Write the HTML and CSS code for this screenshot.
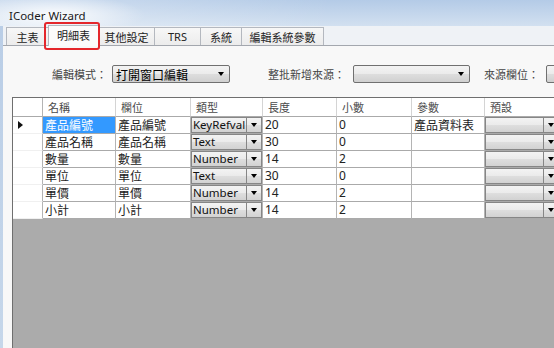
FILE: index.html
```html
<!DOCTYPE html>
<html>
<head>
<meta charset="utf-8">
<link rel="stylesheet" href="styles.css">
</head>
<body>
<div class="window">
  <div class="titlebar"><span class="title">ICoder Wizard</span></div>
  <div class="client">
    <div class="tabstrip">
      <div class="tab w1">主表</div>
      <div class="tab sel w2">明細表</div>
      <div class="tab w3">其他設定</div>
      <div class="tab w4 latin">TRS</div>
      <div class="tab w5">系統</div>
      <div class="tab w6">編輯系統參數</div>
    </div>
    <div class="page">
      <div class="form">
        <span class="lbl l1">編輯模式：</span>
        <div class="combo c1"><span class="ctext">打開窗口編輯</span><span class="arrow"></span></div>
        <span class="lbl l2">整批新增來源：</span>
        <div class="combo c2"><span class="ctext"></span><span class="arrow"></span></div>
        <span class="lbl l3">來源欄位：</span>
        <div class="combo c3"><span class="ctext"></span></div>
      </div>
      <div class="grid">
        <div class="hd rh"></div>
        <div class="hd">名稱</div>
        <div class="hd">欄位</div>
        <div class="hd">類型</div>
        <div class="hd">長度</div>
        <div class="hd">小數</div>
        <div class="hd">參數</div>
        <div class="hd">預設</div>

        <div class="rh"><span class="cur"></span></div>
        <div class="cell selcell">產品編號</div>
        <div class="cell">產品編號</div>
        <div class="cell cc"><div class="gcb"><span class="gt">KeyRefval</span><span class="gb"><span class="arrow"></span></span></div></div>
        <div class="cell num">20</div>
        <div class="cell num">0</div>
        <div class="cell">產品資料表</div>
        <div class="cell cc"><div class="gcb"><span class="gt"></span><span class="gb"><span class="arrow"></span></span></div></div>

        <div class="rh"></div>
        <div class="cell">產品名稱</div>
        <div class="cell">產品名稱</div>
        <div class="cell cc"><div class="gcb"><span class="gt">Text</span><span class="gb"><span class="arrow"></span></span></div></div>
        <div class="cell num">30</div>
        <div class="cell num">0</div>
        <div class="cell"></div>
        <div class="cell cc"><div class="gcb"><span class="gt"></span><span class="gb"><span class="arrow"></span></span></div></div>

        <div class="rh"></div>
        <div class="cell">數量</div>
        <div class="cell">數量</div>
        <div class="cell cc"><div class="gcb"><span class="gt">Number</span><span class="gb"><span class="arrow"></span></span></div></div>
        <div class="cell num">14</div>
        <div class="cell num">2</div>
        <div class="cell"></div>
        <div class="cell cc"><div class="gcb"><span class="gt"></span><span class="gb"><span class="arrow"></span></span></div></div>

        <div class="rh"></div>
        <div class="cell">單位</div>
        <div class="cell">單位</div>
        <div class="cell cc"><div class="gcb"><span class="gt">Text</span><span class="gb"><span class="arrow"></span></span></div></div>
        <div class="cell num">30</div>
        <div class="cell num">0</div>
        <div class="cell"></div>
        <div class="cell cc"><div class="gcb"><span class="gt"></span><span class="gb"><span class="arrow"></span></span></div></div>

        <div class="rh"></div>
        <div class="cell">單價</div>
        <div class="cell">單價</div>
        <div class="cell cc"><div class="gcb"><span class="gt">Number</span><span class="gb"><span class="arrow"></span></span></div></div>
        <div class="cell num">14</div>
        <div class="cell num">2</div>
        <div class="cell"></div>
        <div class="cell cc"><div class="gcb"><span class="gt"></span><span class="gb"><span class="arrow"></span></span></div></div>

        <div class="rh"></div>
        <div class="cell">小計</div>
        <div class="cell">小計</div>
        <div class="cell cc"><div class="gcb"><span class="gt">Number</span><span class="gb"><span class="arrow"></span></span></div></div>
        <div class="cell num">14</div>
        <div class="cell num">2</div>
        <div class="cell"></div>
        <div class="cell cc"><div class="gcb"><span class="gt"></span><span class="gb"><span class="arrow"></span></span></div></div>
      </div>
    </div>
  </div>
  <div class="highlight"></div>
</div>
</body>
</html>
```
FILE: styles.css
```css
html, body {
  margin: 0;
  padding: 0;
  width: 554px;
  height: 348px;
  overflow: hidden;
  font-family: "Noto Sans CJK TC", sans-serif;
}
.window {
  position: relative;
  width: 554px;
  height: 348px;
  display: flex;
  flex-direction: column;
  background: linear-gradient(#b9cde6, #c6d7ea);
  overflow: hidden;
}
.titlebar {
  height: 26px;
  flex: none;
  box-sizing: border-box;
  padding: 9px 0 0 9px;
  background:
    radial-gradient(ellipse 90px 20px at 55px 15px, rgba(255,255,255,0.9), rgba(255,255,255,0)),
    linear-gradient(90deg, rgba(255,255,255,0.35), rgba(255,255,255,0) 60%),
    linear-gradient(#b4cbe7, #d2e0f0);
}
.title {
  font-family: "Noto Sans", "Open Sans", sans-serif;
  font-size: 11.5px;
  line-height: 14px;
  color: #1a1a1a;
  display: block;
}
.client {
  flex: 1;
  min-height: 0;
  margin-left: 3px;
  display: flex;
  flex-direction: column;
  background: #f0f0f0;
}
.tabstrip {
  height: 20px;
  flex: none;
  box-sizing: border-box;
  display: flex;
  align-items: flex-end;
  padding-left: 3px;
  border-bottom: 1px solid #a3a7ae;
  background: #eff2f6;
}
.tab {
  height: 18px;
  box-sizing: border-box;
  border: 1px solid #b4b8bf;
  border-bottom: none;
  margin-right: -1px;
  background: linear-gradient(#f7f7f7, #ececec);
  font-size: 11px;
  line-height: 16px;
  color: #222;
  display: flex;
  align-items: center;
  justify-content: center;
}
.tab.latin {
  font-family: "Noto Sans", "Open Sans", sans-serif;
}
.tab.sel {
  height: 21px;
  margin-bottom: -1px;
  background: #fbfbfb;
  position: relative;
  z-index: 1;
  padding-bottom: 2px;
}
.w1 { width: 43px; }
.w2 { width: 51px; }
.w3 { width: 57px; }
.w4 { width: 47px; }
.w5 { width: 42px; }
.w6 { width: 83px; }

.page {
  flex: 1;
  min-height: 0;
  display: flex;
  flex-direction: column;
  padding: 19px 0 0 9px;
  background: #f8f8f8;
}
.form {
  height: 18px;
  flex: none;
  display: flex;
  align-items: center;
  white-space: nowrap;
  overflow: hidden;
}
.lbl {
  font-size: 11px;
  color: #444;
  flex: none;
  overflow: hidden;
}
.l1 { margin-left: 40px; width: 60px; }
.l2 { margin-left: 38px; width: 85px; }
.l3 { margin-left: 14px; width: 62px; }
.combo {
  flex: none;
  height: 18px;
  box-sizing: border-box;
  border: 1px solid #707070;
  border-radius: 2px;
  background: linear-gradient(#f3f3f3 0%, #ebebeb 48%, #dddddd 52%, #d0d0d0 100%);
  display: flex;
  align-items: center;
  padding: 0 5px 0 3px;
}
.c1 { width: 118px; }
.c2 { width: 117px; }
.c3 { width: 60px; }
.ctext {
  flex: 1;
  font-size: 12px;
  color: #000;
}
.arrow {
  width: 0;
  height: 0;
  border-left: 3.5px solid transparent;
  border-right: 3.5px solid transparent;
  border-top: 4px solid #000;
}

.grid {
  flex: 1;
  min-height: 0;
  margin-top: 14px;
  background: #ababab;
  border-top: 1px solid #6f6f6f;
  border-left: 1px solid #6f6f6f;
  display: grid;
  grid-template-columns: 30px 73px 75px 72px 74px 75px 73px 75px;
  grid-template-rows: 19px repeat(6, 17px);
  align-content: start;
  overflow: hidden;
}
.grid > div {
  box-sizing: border-box;
  background: #fff;
  border-right: 1px solid #b4b4b4;
  border-bottom: 1px solid #aaaaaa;
  white-space: nowrap;
  overflow: hidden;
}
.hd {
  font-size: 11px;
  color: #4a4a4a;
  padding-left: 5px;
  line-height: 18px;
  border-right-color: #d4d4d4 !important;
}
.grid > .rh {
  border-bottom-color: #f0f0f0;
  display: flex;
  align-items: center;
}
.grid > .hd.rh {
  border-bottom-color: #aaaaaa;
  border-right-color: #b4b4b4 !important;
}
.cur {
  width: 0;
  height: 0;
  margin-left: 5px;
  border-top: 4px solid transparent;
  border-bottom: 4px solid transparent;
  border-left: 5px solid #111;
}
.cell {
  font-size: 12px;
  line-height: 16px;
  padding-left: 2px;
  color: #222;
}
.cell.num {
  font-family: "Noto Sans", "Open Sans", sans-serif;
  font-size: 12px;
}
.grid > .selcell {
  background: #3399ff;
  color: #fff;
}
.grid > .cc {
  padding: 0;
  display: flex;
}
.gcb {
  flex: 1;
  display: flex;
  box-sizing: border-box;
  border: 1px solid #868686;
  background: linear-gradient(#f3f3f3 0%, #ebebeb 48%, #dedede 52%, #d2d2d2 100%);
}
.gt {
  flex: 1;
  font-family: "Noto Sans", "Open Sans", sans-serif;
  font-size: 11.5px;
  line-height: 14px;
  padding-left: 1px;
  color: #111;
  overflow: hidden;
}
.gb {
  width: 14px;
  flex: none;
  border-left: 1px solid #868686;
  display: flex;
  align-items: center;
  justify-content: center;
}
.highlight {
  position: absolute;
  left: 44px;
  top: 22px;
  width: 56px;
  height: 28px;
  box-sizing: border-box;
  border: 2px solid #e4262b;
  border-radius: 3px;
  z-index: 5;
}
```
